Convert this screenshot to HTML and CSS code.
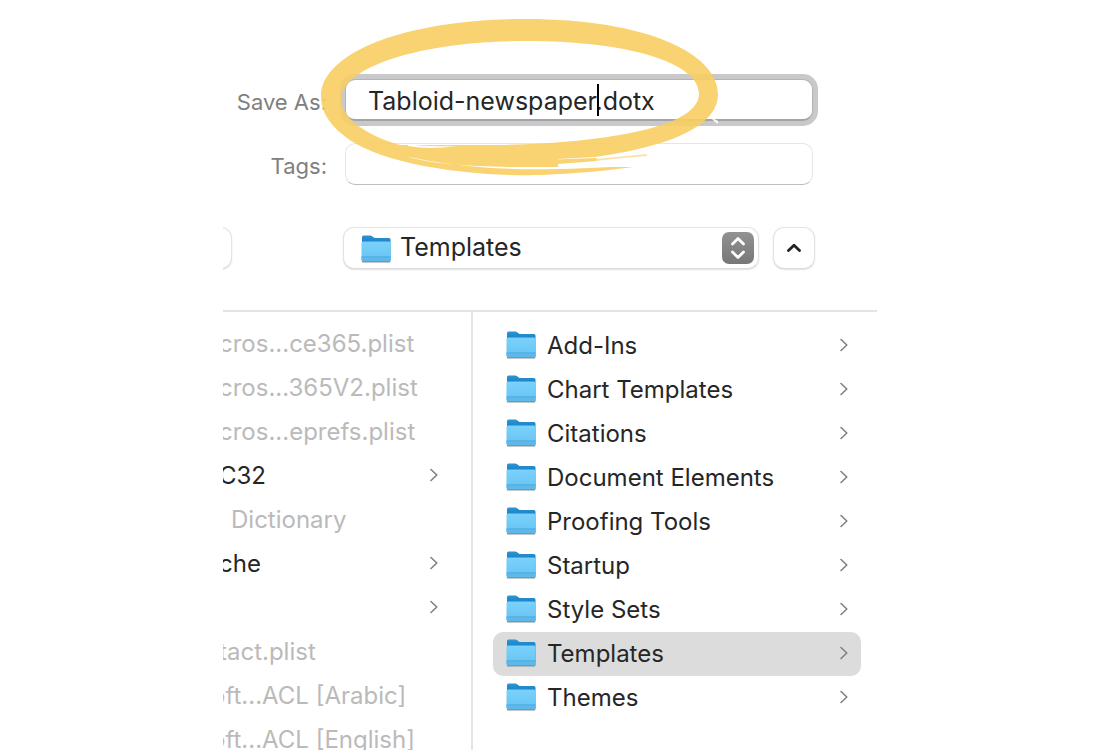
FILE: index.html
```
<!DOCTYPE html>
<html lang="en">
<head>
    <meta charset="UTF-8">
    <meta name="viewport" content="width=device-width, initial-scale=1.0">
    <title>Save As</title>
    <link rel="stylesheet" href="styles.css">
</head>
<body>
    <!-- Shared icons -->
    <svg class="sprite" aria-hidden="true">
        <defs>
            <linearGradient id="folder-front" x1="0" y1="0" x2="0" y2="1">
                <stop offset="0" stop-color="#7bd1fb"/>
                <stop offset="1" stop-color="#66c3f3"/>
            </linearGradient>
            <linearGradient id="folder-back" x1="0" y1="0" x2="0" y2="1">
                <stop offset="0" stop-color="#2f95d3"/>
                <stop offset=".3" stop-color="#1580c4"/>
            </linearGradient>
        </defs>
        <symbol id="folder" viewBox="0 0 30 28">
            <path d="M1 26V2Q1 .5 2.500 .5H9Q10.500 .5 11.500 1.500L13.500 3H28Q29.500 3 29.500 4.500V26Z" fill="url(#folder-back)"/>
            <path d="M1.500 26.700H28.700" stroke="#8b9196" stroke-width="1.400" stroke-linecap="round"/>
            <path d="M.5 8Q.5 6.500 2 6.500H28Q29.500 6.500 29.500 8V24.500Q29.500 26 28 26H2Q.5 26 .5 24.500Z" fill="url(#folder-front)"/>
            <path d="M.5 22H29.500V24.500Q29.500 26 28 26H2Q.5 26 .5 24.500Z" fill="#5cb9ea"/>
            <path d="M.5 21.800H29.500" stroke="#4aa5da" stroke-width=".8"/>
        </symbol>
        <symbol id="chevron" viewBox="0 0 10 14">
            <path d="M2 1.500L7.800 7L2 12.500" fill="none" stroke="#808080" stroke-width="1.600" stroke-linecap="round" stroke-linejoin="round"/>
        </symbol>
    </svg>

    <main class="dialog">
        <form class="save-form">
            <div class="field">
                <label for="filename">Save As:</label>
                <div class="input-wrap">
                    <input type="text" id="filename" class="focused" value="Tabloid-newspaper.dotx">
                    <span class="caret"></span>
                </div>
            </div>
            <div class="field">
                <label for="tags">Tags:</label>
                <div class="input-wrap">
                    <input type="text" id="tags">
                </div>
            </div>

            <div class="toolbar">
                <button type="button" class="view-button" aria-label="View"></button>
                <div class="location">
                    <svg class="folder"><use href="#folder"/></svg>
                    <select id="location" aria-label="Location">
                        <option>Templates</option>
                    </select>
                    <svg class="stepper" viewBox="0 0 32 32">
                        <defs>
                            <linearGradient id="stepper-fill" x1="0" y1="0" x2="0" y2="1">
                                <stop offset="0" stop-color="#929292"/>
                                <stop offset="1" stop-color="#777"/>
                            </linearGradient>
                        </defs>
                        <rect width="32" height="32" rx="7" fill="url(#stepper-fill)"/>
                        <path d="M10.500 12L16 6.500L21.500 12M10.500 20L16 25.500L21.500 20" fill="none" stroke="#fff" stroke-width="2.800" stroke-linecap="round" stroke-linejoin="round"/>
                    </svg>
                </div>
                <button type="button" class="collapse-button" aria-label="Collapse">
                    <svg viewBox="0 0 14 10">
                        <path d="M1.500 7.500L7 2.200L12.500 7.500" fill="none" stroke="#222" stroke-width="2.800" stroke-linecap="round" stroke-linejoin="round"/>
                    </svg>
                </button>
            </div>
        </form>

        <!-- Hand drawn ring around the file name -->
        <svg class="highlight" viewBox="0 0 402 162" aria-hidden="true">
            <path fill-rule="evenodd" d="M1 80C1 38 82 3 205 3C328 3 398 38 398 78C398 112 345 131 275 141L238 143L238 151L205 152L245 153L292 151L313 151C270 157 220 160 190 159C130 157 73 147 40 130C15 116 1 100 1 80ZM21 84C22 102 45 119 80 129L180 129C282 127 379 112 379 78C379 46 306 25 207 25C98 25 20 52 21 84Z"/>
            <path d="M220 144L277 142V145L238 148L220 149Z"/>
            <path class="faint" d="M276 143L328 138L326 140L292 143L276 145Z"/>
            <path class="gap" d="M88 128Q105 131 137 130Q110 134 88 130Z"/>
            <path class="gap" d="M85 140Q115 150 190 151L238 151V153Q150 155 85 140Z"/>
            <path class="gap" d="M389 100L398 105V108L395 106Z"/>
        </svg>

        <div class="browser">
            <ul class="column files">
                <li><button type="button" disabled>cros...ce365.plist</button></li>
                <li><button type="button" disabled>cros...365V2.plist</button></li>
                <li><button type="button" disabled>cros...eprefs.plist</button></li>
                <li><button type="button">C32<svg class="chevron"><use href="#chevron"/></svg></button></li>
                <li class="indent"><button type="button" disabled>Dictionary</button></li>
                <li><button type="button">che<svg class="chevron"><use href="#chevron"/></svg></button></li>
                <li><button type="button" aria-label="Folder"><svg class="chevron"><use href="#chevron"/></svg></button></li>
                <li><button type="button" disabled>tact.plist</button></li>
                <li class="cut"><button type="button" disabled>oft...ACL [Arabic]</button></li>
                <li class="cut"><button type="button" disabled>oft...ACL [English]</button></li>
            </ul>
            <ul class="column folders">
                <li><button type="button"><svg class="folder"><use href="#folder"/></svg>Add-Ins<svg class="chevron"><use href="#chevron"/></svg></button></li>
                <li><button type="button"><svg class="folder"><use href="#folder"/></svg>Chart Templates<svg class="chevron"><use href="#chevron"/></svg></button></li>
                <li><button type="button"><svg class="folder"><use href="#folder"/></svg>Citations<svg class="chevron"><use href="#chevron"/></svg></button></li>
                <li><button type="button"><svg class="folder"><use href="#folder"/></svg>Document Elements<svg class="chevron"><use href="#chevron"/></svg></button></li>
                <li><button type="button"><svg class="folder"><use href="#folder"/></svg>Proofing Tools<svg class="chevron"><use href="#chevron"/></svg></button></li>
                <li><button type="button"><svg class="folder"><use href="#folder"/></svg>Startup<svg class="chevron"><use href="#chevron"/></svg></button></li>
                <li><button type="button"><svg class="folder"><use href="#folder"/></svg>Style Sets<svg class="chevron"><use href="#chevron"/></svg></button></li>
                <li><button type="button" class="selected"><svg class="folder"><use href="#folder"/></svg>Templates<svg class="chevron"><use href="#chevron"/></svg></button></li>
                <li><button type="button"><svg class="folder"><use href="#folder"/></svg>Themes<svg class="chevron"><use href="#chevron"/></svg></button></li>
            </ul>
        </div>
    </main>
</body>
</html>
```
FILE: styles.css
```
* {
    box-sizing: border-box;
}

body {
    font-family: Inter, "Liberation Sans", sans-serif;
    font-size: 24px;
    color: #262626;
    background-color: #fff;
    margin: 0;
}

button,
input,
select {
    font: inherit;
    color: inherit;
}

.sprite {
    position: absolute;
    width: 0;
    height: 0;
}

.dialog {
    position: relative;
    display: flex;
    flex-direction: column;
    max-width: 654px;
    height: 100vh;
    margin: 0 auto;
    padding-top: 79px;
    overflow: hidden;
}

.field {
    display: flex;
    align-items: center;
    gap: 18px;
    margin-bottom: 22px;
    padding-right: 64px;
}

.field label {
    width: 104px;
    padding-top: 3px;
    color: #808080;
    font-size: 22px;
    text-align: right;
    white-space: nowrap;
}

.input-wrap {
    position: relative;
    flex: 1;
}

.input-wrap input {
    display: block;
    width: 100%;
    height: 42px;
    padding: 2px 22px 0;
    font-size: 25px;
    background-color: #fff;
    border: 1px solid #e6e6e6;
    border-bottom-color: #bdbdbd;
    border-radius: 10px;
    outline: none;
}

.input-wrap input.focused {
    border-color: #b4b4b7;
    border-bottom: 2px solid #a4a4a7;
    box-shadow: 0 0 0 5px #c9c9cc;
}

.caret {
    position: absolute;
    left: 252px;
    top: 5px;
    width: 2px;
    height: 32px;
    background-color: #000;
}

.toolbar {
    display: flex;
    align-items: center;
    margin-top: 43px;
    padding-right: 63px;
}

.view-button,
.collapse-button,
.location select {
    height: 40px;
    background-color: #fff;
    border: none;
    border-radius: 10px;
    box-shadow: 0 0 1px 1px #e3e3e3, 0 1px 2px #999;
}

.view-button {
    width: 40px;
    margin-left: -32px;
    margin-right: 113px;
}

.location {
    position: relative;
    flex: 1;
    margin-right: 16px;
}

.location select {
    display: block;
    width: 100%;
    padding: 0 44px 2px 56px;
    font-size: 25px;
    appearance: none;
}

.location .folder {
    position: absolute;
    left: 17px;
    top: 7px;
}

.stepper {
    position: absolute;
    right: 4px;
    top: 4px;
    width: 32px;
    height: 32px;
    pointer-events: none;
}

.collapse-button {
    display: flex;
    align-items: center;
    justify-content: center;
    width: 40px;
    padding: 0;
}

.collapse-button svg {
    width: 14px;
    height: 10px;
}

.highlight {
    position: absolute;
    left: 97px;
    top: 16px;
    width: 402px;
    height: 162px;
    fill: #f9cf63;
    opacity: 0.9;
    pointer-events: none;
}

.highlight .gap {
    fill: #fff;
}

.highlight .faint {
    fill: #fbdc9c;
}

.browser {
    display: flex;
    flex: 1;
    min-height: 0;
    margin-top: 42px;
    border-top: 2px solid #e4e4e4;
}

.column {
    list-style-type: none;
    margin: 0;
    overflow: hidden;
}

.column button {
    display: flex;
    align-items: center;
    width: 100%;
    height: 44px;
    padding: 0 0 2px;
    background: none;
    border: none;
    border-radius: 10px;
    text-align: left;
    white-space: nowrap;
}

.column button:disabled {
    color: #bababa;
}

.files {
    width: 250px;
    padding: 10px 32px 0 0;
    border-right: 2px solid #e4e4e4;
}

.files li {
    margin-left: -4px;
}

.files .indent {
    margin-left: 8px;
}

.files .cut {
    margin-left: -12px;
}

.folders {
    flex: 1;
    padding: 12px 16px 0 20px;
}

.folders button {
    padding: 0 12px 2px 13px;
}

.folders .selected {
    background-color: #dcdcdc;
}

.folder {
    flex: none;
    width: 30px;
    height: 28px;
    margin-right: 11px;
}

.chevron {
    flex: none;
    width: 10px;
    height: 14px;
    margin-left: auto;
}
```
